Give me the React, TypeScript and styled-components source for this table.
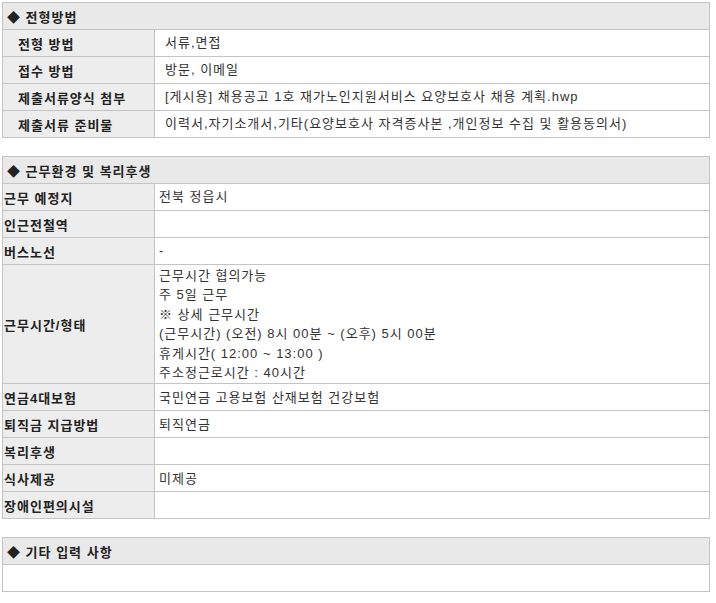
import styled, { createGlobalStyle } from "styled-components";

const GlobalStyle = createGlobalStyle`
    body {
        margin: 0;
        background: #ffffff;
        font-family: "Liberation Sans", "Noto Sans CJK KR", sans-serif;
        font-size: 13px;
        letter-spacing: 1px;
        color: #222222;
    }
`;

const Page = styled.div`
    width: 708px;
    padding: 2px 0 0 2px;
    display: flex;
    flex-direction: column;
    gap: 18px;
`;

const Section = styled.section`
    border: 1px solid #c4c4c4;
    border-bottom: none;
`;

const SectionTitle = styled.div`
    height: 26px;
    display: flex;
    align-items: center;
    padding-left: 4px;
    background: #e9e9e9;
    border-bottom: 1px solid #c4c4c4;
    font-weight: bold;
`;

const Row = styled.div`
    display: grid;
    grid-template-columns: 152px 1fr;
    min-height: 26px;
    border-bottom: 1px solid #c4c4c4;
`;

const Label = styled.div<{ $indent: number }>`
    display: flex;
    align-items: center;
    padding-left: ${(p) => p.$indent}px;
    background: #ededed;
    border-right: 1px solid #c4c4c4;
    font-weight: bold;
`;

const Value = styled.div<{ $indent: number }>`
    display: flex;
    flex-direction: column;
    justify-content: center;
    padding: 1px 4px 1px ${(p) => p.$indent}px;
    line-height: 19.4px;
    color: #333333;
`;

const EmptyRow = styled.div`
    height: 26px;
    border-bottom: 1px solid #c4c4c4;
`;

const selection = [
    ["전형 방법", "서류,면접"],
    ["접수 방법", "방문, 이메일"],
    ["제출서류양식 첨부", "[게시용] 채용공고 1호 재가노인지원서비스 요양보호사 채용 계획.hwp"],
    ["제출서류 준비물", "이력서,자기소개서,기타(요양보호사 자격증사본 ,개인정보 수집 및 활용동의서)"],
];

const welfare: [string, string[]][] = [
    ["근무 예정지", ["전북 정읍시"]],
    ["인근전철역", [""]],
    ["버스노선", ["-"]],
    [
        "근무시간/형태",
        [
            "근무시간 협의가능",
            "주 5일 근무",
            "※ 상세 근무시간",
            "(근무시간) (오전) 8시 00분 ~ (오후) 5시 00분",
            "휴게시간( 12:00 ~ 13:00 )",
            "주소정근로시간 : 40시간",
        ],
    ],
    ["연금4대보험", ["국민연금 고용보험 산재보험 건강보험"]],
    ["퇴직금 지급방법", ["퇴직연금"]],
    ["복리후생", [""]],
    ["식사제공", ["미제공"]],
    ["장애인편의시설", [""]],
];

export default function App() {
    return (
        <>
            <GlobalStyle />
            <Page>
                <Section>
                    <SectionTitle>◆ 전형방법</SectionTitle>
                    {selection.map(([label, value]) => (
                        <Row key={label}>
                            <Label $indent={15}>{label}</Label>
                            <Value $indent={10}>{value}</Value>
                        </Row>
                    ))}
                </Section>

                <Section>
                    <SectionTitle>◆ 근무환경 및 복리후생</SectionTitle>
                    {welfare.map(([label, lines]) => (
                        <Row key={label}>
                            <Label $indent={1}>{label}</Label>
                            <Value $indent={4}>
                                {lines.map((line, i) => (
                                    <span key={i}>{line}</span>
                                ))}
                            </Value>
                        </Row>
                    ))}
                </Section>

                <Section>
                    <SectionTitle>◆ 기타 입력 사항</SectionTitle>
                    <EmptyRow />
                </Section>
            </Page>
        </>
    );
}
